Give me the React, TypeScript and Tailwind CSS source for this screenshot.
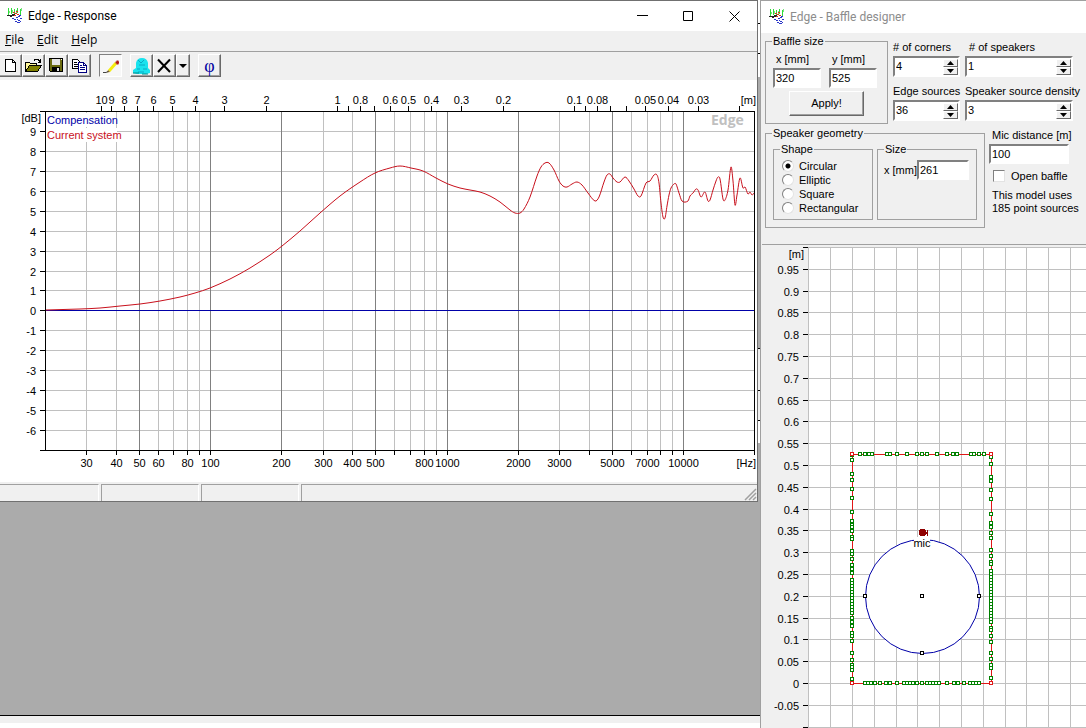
import { useState } from 'react';
import type { ReactNode } from 'react';

const DECADE = 236.6;

const freqX = (f: number) => Math.round(210 + DECADE * (Math.log10(f) - 2)) + 0.5;
const levelY = (db: number) => Math.round(31 + ((10 - db) * 339) / 17) + 0.5;
const SPEED_OF_SOUND = 345;

const frequencies = [
  30, 40, 50, 60, 70, 80, 90, 100, 200, 300, 400, 500, 600, 700, 800, 900,
  1000, 2000, 3000, 4000, 5000, 6000, 7000, 8000, 9000, 10000
];
const strongFrequencies = [50, 100, 200, 500, 1000, 2000, 5000, 10000];
const hiddenFrequencies = [70, 90, 600, 700, 900, 4000, 6000, 8000, 9000];

const wavelengths = [
  10, 9, 8, 7, 6, 5, 4, 3, 2, 1, 0.9, 0.8, 0.7, 0.6, 0.5, 0.4, 0.3, 0.2,
  0.1, 0.09, 0.08, 0.07, 0.06, 0.05, 0.04, 0.03, 0.02
];
const hiddenWavelengths = [0.9, 0.7, 0.09, 0.07, 0.06, 0.02];

const levels = [9, 8, 7, 6, 5, 4, 3, 2, 1, 0, -1, -2, -3, -4, -5, -6];

const response: [number, number][] = [
  [46, 230], [80, 229], [100, 228], [120, 226], [140, 224], [160, 221], [180, 217],
  [195, 213], [210, 208], [230, 199], [250, 188], [270, 175], [282, 166], [300, 151],
  [320, 133], [340, 116], [360, 102], [375, 93], [390, 88], [400, 86], [411, 88],
  [423, 91], [436, 98], [448, 104], [460, 108], [470, 110], [480, 112], [490, 116],
  [500, 122], [510, 130], [515, 133], [520, 133], [524, 129], [530, 117], [537, 96],
  [541, 87], [545, 83], [549, 83], [554, 90], [559, 101], [563, 106], [567, 107],
  [572, 104], [577, 102], [582, 105], [588, 113], [595, 121], [599, 117], [604, 102],
  [607, 95], [610, 94], [613, 98], [617, 102], [620, 102], [625, 97], [629, 101],
  [634, 109], [638, 116], [641, 116], [646, 103], [650, 101], [654, 95], [657, 95],
  [659, 103], [661, 123], [663, 137], [665, 138], [667, 126], [669, 115], [671, 108],
  [674, 104], [676, 104], [679, 113], [682, 121], [688, 121], [690, 116], [693, 113],
  [696, 109], [698, 110], [701, 117], [705, 112], [708, 121], [710, 120], [713, 110],
  [716, 101], [718, 97], [720, 99], [723, 119], [725, 120], [728, 110], [731, 87],
  [733, 101], [735, 125], [737, 115], [740, 98], [743, 108], [745, 107], [748, 114],
  [750, 112], [752, 115], [754, 113]
];

const smoothPath = (points: [number, number][]) => {
  let d = `M${points[0][0]} ${points[0][1]}`;
  for (let i = 0; i < points.length - 1; i++) {
    const before = points[Math.max(i - 1, 0)];
    const from = points[i];
    const to = points[i + 1];
    const after = points[Math.min(i + 2, points.length - 1)];
    const span = (to[0] - from[0]) / 3;
    const m1 = (to[1] - before[1]) / (to[0] - before[0]);
    const m2 = (after[1] - from[1]) / (after[0] - from[0]);
    d += `C${from[0] + span} ${from[1] + m1 * span} ${to[0] - span} ${to[1] - m2 * span} ${to[0]} ${to[1]}`;
  }
  return d;
};

const AppIcon = () => (
  <svg width="16" height="16" viewBox="0 0 16 16" fill="none" shapeRendering="crispEdges" aria-hidden="true">
    <path d="M1.5 0v7M4.5 0v6M7.5 1v6M10.5 0v5M13.5 1v6" stroke="#2fdc3a" />
    <path d="M2.5 3v2M5.5 2v3M9.5 2v3M14.5 0v3" stroke="#7be57f" />
    <path d="M0 7.5h8M3 8.5h2M5 6.5h3" stroke="#222" />
    <path d="M6 4.5h2M8 5.5h2M10 6.5h2M7 7.5h2M9 3.5h2" stroke="#e03020" />
    <path d="M5 10.5h2M7 11.5h2M9 9.5h2M11 8.5h2M8 13.5h2M11 12.5h2M13 10.5h2M10 14.5h3M13 13.5h1M12 7.5h2M10 11.5h1" stroke="#2a35c8" />
  </svg>
);

const ResponseChart = () => (
  <svg viewBox="0 0 757 402" className="block w-full bg-white font-['Liberation_Sans',Arial,sans-serif] text-[11px]">
    <g shapeRendering="crispEdges">
      {levels.map((db) => (
        <path key={db} d={`M46 ${levelY(db)}H754`} stroke="#c0c0c0" />
      ))}
      {frequencies.map((f) => (
        <path key={f} d={`M${freqX(f)} 32V370`} stroke={strongFrequencies.includes(f) ? '#808080' : '#c0c0c0'} />
      ))}
      <path d="M40 31.5H755M40 370.5H755M45.5 31V371M754.5 31V375" stroke="#000" />
      {levels.map((db) => (
        <path key={db} d={`M40 ${levelY(db)}H45`} stroke="#000" />
      ))}
      {frequencies.map((f) => (
        <path key={f} d={`M${freqX(f)} 370V375`} stroke="#000" />
      ))}
      {wavelengths.map((w) => (
        <path key={w} d={`M${freqX(SPEED_OF_SOUND / w)} 26V31`} stroke="#000" />
      ))}
      <path d={`M46 ${levelY(0)}H754`} stroke="#0000a8" />
    </g>
    <path d={smoothPath(response)} fill="none" stroke="#c8101c" />
    <rect x="46" y="33" width="70" height="14" fill="#fff" />
    <rect x="46" y="48" width="71" height="14" fill="#fff" />
    <g textAnchor="end">
      {levels.map((db) => (
        <text key={db} x="36" y={levelY(db) + 4}>{db}</text>
      ))}
      <text x="41" y="42">[dB]</text>
      <text x="756" y="24">[m]</text>
      <text x="756" y="387">[Hz]</text>
    </g>
    <g textAnchor="middle">
      {frequencies.filter((f) => !hiddenFrequencies.includes(f)).map((f) => (
        <text key={f} x={freqX(f)} y="387">{f}</text>
      ))}
      {wavelengths.filter((w) => !hiddenWavelengths.includes(w)).map((w) => (
        <text key={w} x={freqX(SPEED_OF_SOUND / w)} y="24">{w}</text>
      ))}
    </g>
    <text x="47" y="44" fill="#0000a8">Compensation</text>
    <text x="47" y="59" fill="#c8101c">Current system</text>
    <text x="711" y="45" fill="#c0c0c0" className="font-['Open_Sans',sans-serif] text-[14px] font-bold">Edge</text>
  </svg>
);

const ToolButton = ({ label, pressed, narrow, children }: { label: string; pressed?: boolean; narrow?: boolean; children: ReactNode }) => (
  <button
    type="button"
    aria-label={label}
    className={`flex h-[23px] shrink-0 items-center justify-center border ${narrow ? 'w-[14px]' : 'w-[23px]'} ${
      pressed
        ? 'border-t-[#808080] border-l-[#808080] border-r-white border-b-white bg-[#f7f7f7]'
        : 'border-t-white border-l-white border-r-[#696969] border-b-[#696969] bg-[#f0f0f0] shadow-[inset_-1px_-1px_0_#a0a0a0]'
    }`}
  >
    {children}
  </button>
);

const Toolbar = () => (
  <div className="flex h-7 items-start overflow-hidden bg-[#f0f0f0] pt-[2px]">
    <div className="-ml-px flex">
      <ToolButton label="New">
        <svg width="17" height="17" viewBox="0 0 17 17" shapeRendering="crispEdges">
          <path d="M3.5 2.5h7l3 3v9h-10z" fill="#fff" stroke="#000" />
          <path d="M10.5 2.5v3h3" fill="none" stroke="#000" />
        </svg>
      </ToolButton>
      <ToolButton label="Open">
        <svg width="17" height="17" viewBox="0 0 17 17" shapeRendering="crispEdges">
          <path d="M0.500 14.500v-9h4l1 1h6v2" fill="#fff79a" stroke="#000" />
          <path d="M0.500 14.500l4-6h12l-4 6z" fill="#808000" stroke="#000" />
          <path d="M9 3.500l1-1h3l2 2M15.500 2v3h-3" fill="none" stroke="#000" />
        </svg>
      </ToolButton>
      <ToolButton label="Save">
        <svg width="17" height="17" viewBox="0 0 17 17" shapeRendering="crispEdges">
          <path d="M1.500 1.500h13v13h-12l-1-1z" fill="#6b6b10" stroke="#000" />
          <path d="M4 2h8v6h-8z" fill="#e4e4e4" />
          <path d="M4 10h8v4h-8z" fill="#000" />
          <path d="M9 11h2v3h-2z" fill="#e4e4e4" />
          <path d="M13 2h1v1h-1z" fill="#fff" />
        </svg>
      </ToolButton>
      <ToolButton label="Copy">
        <svg width="17" height="17" viewBox="0 0 17 17" shapeRendering="crispEdges">
          <path d="M1.500 2.500h5l3 3v6h-8z" fill="#fff" stroke="#000" />
          <path d="M3 5.500h3M3 7.500h4M3 9.500h4" stroke="#000" />
          <path d="M7.500 5.500h5l3 3v7h-8z" fill="#fff" stroke="#000080" />
          <path d="M12.500 5.500v3h3M9 8.500h2M9 10.500h5M9 12.500h5" fill="none" stroke="#000080" />
        </svg>
      </ToolButton>
    </div>
    <div className="ml-2 flex">
      <ToolButton label="Draw curve" pressed>
        <svg width="17" height="17" viewBox="0 0 17 17">
          <path d="M7 14l7-8" stroke="#f4ec10" strokeWidth="3" />
          <path d="M15.500 3.500v4M13.500 5.500h4" stroke="#b01818" strokeWidth="2" />
          <path d="M5 15.500l1-2.500 2 2z" fill="#806020" />
          <path d="M1 15.500h3l2-1" fill="none" stroke="#444" />
        </svg>
      </ToolButton>
    </div>
    <div className="ml-2 flex">
      <ToolButton label="Baffle">
        <svg width="17" height="18" viewBox="0 0 17 18">
          <path d="M3 11V6q1-5 6-5t6 5v5l2 2v3l-4 1H4l-4-1v-3z" fill="#19e3ee" />
          <path d="M5 3l3 3M11 3l-3 3M6 8h6M4 12h3M10 12h4M5 15h6" stroke="#0aa9c4" />
          <path d="M0 16h6M9 17h6" stroke="#088" />
        </svg>
      </ToolButton>
      <ToolButton label="Delete">
        <svg width="17" height="17" viewBox="0 0 17 17" fill="none">
          <path d="M2 2.500L14 15" stroke="#000" strokeWidth="2" />
          <path d="M14 2.500L2 15" stroke="#000" strokeWidth="2" />
        </svg>
      </ToolButton>
      <ToolButton label="Delete options" narrow>
        <svg width="8" height="4" viewBox="0 0 8 4"><path d="M0 0h8L4 4z" /></svg>
      </ToolButton>
    </div>
    <div className="ml-2 flex">
      <ToolButton label="Phase">
        <span className="font-['Liberation_Serif',serif] text-[18px] leading-4 text-[#0000a0]">φ</span>
      </ToolButton>
    </div>
  </div>
);

const ResponseWindow = () => (
  <section className="border-t border-r border-b border-[#707070] bg-[#f0f0f0]">
    <header className="flex h-[30px] items-center bg-white pl-[7px]">
      <AppIcon />
      <h1 className="ml-[5px] flex-1 font-['Roboto',sans-serif] text-[12px]">Edge - Response</h1>
      <button type="button" aria-label="Minimize" className="flex h-full w-[45px] items-center justify-center">
        <svg width="11" height="11" viewBox="0 0 11 11"><path d="M0 4.500h11" stroke="#000" /></svg>
      </button>
      <button type="button" aria-label="Maximize" className="flex h-full w-[46px] items-center justify-center">
        <svg width="11" height="11" viewBox="0 0 11 11" fill="none"><path d="M.5.5h9v9h-9z" stroke="#000" /></svg>
      </button>
      <button type="button" aria-label="Close" className="flex h-full w-[46px] items-center justify-center">
        <svg width="11" height="11" viewBox="0 0 11 11"><path d="M.5.5l10 10M10.500.5l-10 10" stroke="#000" /></svg>
      </button>
    </header>
    <nav className="flex h-[21px] items-start gap-[13px] border-b border-[#a0a0a0] pl-[5px] text-[12px] leading-[18px]">
      <button type="button"><u>F</u>ile</button>
      <button type="button"><u>E</u>dit</button>
      <button type="button"><u>H</u>elp</button>
    </nav>
    <Toolbar />
    <ResponseChart />
    <footer className="flex h-[19px] gap-[2px] pt-[2px]">
      <div className="w-[99px] border-t border-[#a0a0a0] border-r border-r-white" />
      <div className="w-[98px] border-t border-l border-[#a0a0a0] border-r border-r-white" />
      <div className="w-[98px] border-t border-l border-[#a0a0a0] border-r border-r-white" />
      <div className="flex flex-1 items-end justify-end border-t border-l border-[#a0a0a0]">
        <svg width="13" height="13" viewBox="0 0 13 13" stroke="#a0a0a0" strokeWidth="1.500">
          <path d="M1 12L12 1M5 12l7-7M9 12l3-3" />
        </svg>
      </div>
    </footer>
  </section>
);

const sunken = 'border-2 border-t-[#808080] border-l-[#808080] border-r-white border-b-white bg-white';

const NumberBox = ({ label, id, value, className }: { label: string; id: string; value: string; className: string }) => (
  <div>
    <label htmlFor={id} className="mb-[2px] block pl-[3px] leading-[14px] whitespace-nowrap">{label}</label>
    <input id={id} defaultValue={value} className={`h-5 pl-px outline-none ${sunken} ${className}`} />
  </div>
);

const Spinner = ({ label, id, initial, indent }: { label: string; id: string; initial: number; indent?: boolean }) => {
  const [value, setValue] = useState(initial);
  const arrow = 'flex h-2 w-[15px] items-center justify-center border border-t-white border-l-white border-r-[#696969] border-b-[#696969] bg-[#f0f0f0]';
  return (
    <div>
      <label htmlFor={id} className={`mb-[2px] block leading-[14px] whitespace-nowrap ${indent ? 'pl-1' : ''}`}>{label}</label>
      <div className={`flex h-[21px] items-center ${sunken}`}>
        <input
          id={id}
          value={value}
          onChange={(e) => setValue(Number(e.target.value) || 0)}
          className="w-0 min-w-0 flex-1 pl-px outline-none"
        />
        <div>
          <button type="button" aria-label={`Increase ${label}`} className={arrow} onClick={() => setValue(value + 1)}>
            <svg width="7" height="4" viewBox="0 0 7 4" className="shrink-0"><path d="M0 4h7L3.500 0z" /></svg>
          </button>
          <button type="button" aria-label={`Decrease ${label}`} className={arrow} onClick={() => setValue(value - 1)}>
            <svg width="7" height="4" viewBox="0 0 7 4" className="shrink-0"><path d="M0 0h7L3.500 4z" /></svg>
          </button>
        </div>
      </div>
    </div>
  );
};

const Group = ({ title, className, children }: { title: string; className: string; children: ReactNode }) => (
  <fieldset className={`border border-[#a0a0a0] ${className}`}>
    <legend className="ml-[6px] px-px leading-3">{title}</legend>
    {children}
  </fieldset>
);

const shapes = ['Circular', 'Elliptic', 'Square', 'Rectangular'];

const Controls = () => {
  const [shape, setShape] = useState('Circular');
  return (
    <div className="border-b border-[#a0a0a0] bg-[#f0f0f0] pt-[2px] pb-4 pl-[3px] font-['Liberation_Sans',Arial,sans-serif] text-[11px]">
      <div className="flex gap-[5px] pr-[13px]">
        <Group title="Baffle size" className="w-[123px] shrink-0 pb-[7px]">
          <div className="flex gap-2 px-[7px] pt-[5px]">
            <NumberBox label="x [mm]" id="baffle-x" value="320" className="w-[48px]" />
            <NumberBox label="y [mm]" id="baffle-y" value="525" className="w-[48px]" />
          </div>
          <button type="button" className="mx-auto mt-[3px] block h-[25px] w-[75px] border border-t-white border-l-white border-r-[#696969] border-b-[#696969] shadow-[inset_-1px_-1px_0_#a0a0a0]">
            Apply!
          </button>
        </Group>
        <div className="grid flex-1 grid-cols-[67px_minmax(0,1fr)] content-start gap-x-[5px] gap-y-[7px] pt-[5px]">
          <Spinner label="# of corners" id="corners" initial={4} />
          <Spinner label="# of speakers" id="speakers" initial={1} indent />
          <Spinner label="Edge sources" id="edge-sources" initial={36} />
          <Spinner label="Speaker source density" id="density" initial={3} />
        </div>
      </div>
      <div className="mt-[3px] flex gap-1">
        <Group title="Speaker geometry" className="w-[220px] shrink-0 pb-[7px]">
          <div className="flex gap-1 px-[7px] pt-1">
            <Group title="Shape" className="w-[100px] shrink-0 pb-1">
              <div className="pt-1">
                {shapes.map((name) => (
                  <label key={name} className="flex h-[14px] items-center gap-[5px] pl-2">
                    <input
                      type="radio"
                      name="shape"
                      checked={shape === name}
                      onChange={() => setShape(name)}
                      className="size-3 appearance-none rounded-full border border-t-[#808080] border-l-[#808080] border-r-[#e3e3e3] border-b-[#e3e3e3] bg-white checked:bg-[radial-gradient(circle,#000_2px,#fff_3px)]"
                    />
                    {name}
                  </label>
                ))}
              </div>
            </Group>
            <Group title="Size" className="w-[100px] shrink-0">
              <div className="flex items-center pt-[5px] pl-[6px]">
                <label htmlFor="size-x" className="whitespace-nowrap">x [mm]</label>
                <input id="size-x" defaultValue="261" className={`h-5 w-[52px] pl-px outline-none ${sunken}`} />
              </div>
            </Group>
          </div>
        </Group>
        <div className="pt-px">
          <NumberBox label="Mic distance [m]" id="mic-distance" value="100" className="w-[80px]" />
          <label className="mt-[5px] flex h-[14px] items-center gap-[6px] pl-1">
            <input type="checkbox" className="size-3 appearance-none border border-t-[#808080] border-l-[#808080] border-r-[#e3e3e3] border-b-[#e3e3e3] bg-white checked:bg-black" />
            Open baffle
          </label>
          <p className="mt-[6px] pl-[3px] leading-[13px]">
            This model uses
            <br />
            185 point sources
          </p>
        </div>
      </div>
    </div>
  );
};

// Baffle drawing: 436 units per metre, origin at the lower left corner
const metreY = (m: number) => Math.round(438 - 436 * m) + 0.5;
const metreX = (m: number) => Math.round(90 + 436 * m) + 0.5;

const gridColumns = Array.from({ length: 13 }, (_, i) => (i - 2) / 20);
const gridRows = Array.from({ length: 23 }, (_, i) => (20 - i) / 20);

const run = (from: number, to: number) => Array.from({ length: (to - from) / 3 + 1 }, (_, i) => from + i * 3);

const topSources = [98, 103, 107, 110, 125, 128, 135, 145, 155, 160, 165, 175, 185, 191, 195, 209, 212, 217, 222];
const bottomSources = [
  103, 106, 109, 113, 118, 124, 128, 135, 142, 145, 148, 151, 155, 160, 165, 168, 171, 174, 177, 185, 192, 196,
  202, 208, 211, 214, 217
];
const leftSources = [
  210, 215, 229, 235, 244, 253, 267, 276, 280, 282, 286, 292, 294, 306, 309, 314, 320, 324, 328, ...run(335, 368),
  373, 377, 381, 388, 391, 396, 408, 415, 420, 422, 425, 434
];
const rightSources = [
  212, 219, 232, 236, 245, 254, 269, 278, 282, 288, 293, 305, 311, 317, 319, ...run(326, 377), 383, 385, 391, 397,
  408, 414, 420, 423, 433
];

const Handle = ({ x, y, color }: { x: number; y: number; color: string }) => (
  <rect x={x - 1.5} y={y - 1.5} width="3" height="3" fill="#fff" stroke={color} />
);

const BaffleDrawing = () => (
  <svg viewBox="0 0 324 483" className="block w-full bg-[#f0f0f0] font-['Liberation_Sans',Arial,sans-serif] text-[11px]">
    <rect x="46" y="2" width="278" height="481" fill="#fff" />
    <g shapeRendering="crispEdges">
      {gridColumns.map((m) => (
        <path key={m} d={`M${metreX(m)} 2V483`} stroke="#c0c0c0" />
      ))}
      {gridRows.map((m) => (
        <g key={m}>
          <path d={`M46 ${metreY(m)}H324`} stroke="#c0c0c0" />
          <path d={`M41 ${metreY(m)}H46`} stroke="#000" />
        </g>
      ))}
      <rect x="90.5" y="209.5" width="139" height="229" fill="none" stroke="#e01818" />
    </g>
    <circle cx="160.5" cy="351.5" r="57" fill="#fff" stroke="#0000a8" />
    <rect x="152" y="292" width="16" height="13" fill="#fff" />
    <g shapeRendering="crispEdges">
      {topSources.map((x) => <Handle key={x} x={x} y={209} color="#008000" />)}
      {bottomSources.map((x) => <Handle key={x} x={x} y={438} color="#008000" />)}
      {leftSources.map((y) => <Handle key={y} x={90} y={y} color="#008000" />)}
      {rightSources.map((y) => <Handle key={y} x={229} y={y} color="#008000" />)}
      <Handle x={90} y={209} color="#e01818" />
      <Handle x={229} y={209} color="#e01818" />
      <Handle x={90} y={438} color="#e01818" />
      <Handle x={229} y={438} color="#e01818" />
      <Handle x={103} y={351} color="#000" />
      <Handle x={160} y={351} color="#000" />
      <Handle x={217} y={351} color="#000" />
      <Handle x={160} y={408} color="#000" />
      <path d="M158 284h5v1h1v2h1v-2h1v6h-1v-2h-1v1h-1v1h-5v-1h-1v-5h1z" fill="#900000" />
    </g>
    <text x="160" y="302" textAnchor="middle">mic</text>
    <g textAnchor="end">
      <text x="42" y="13">[m]</text>
      {gridRows.slice(1, -1).map((m) => (
        <text key={m} x="37" y={metreY(m) + 4}>{m}</text>
      ))}
    </g>
  </svg>
);

const BaffleWindow = () => (
  <section className="flex w-[326px] shrink-0 flex-col border-t border-l border-[#a0a0a0] bg-[#f0f0f0]">
    <header className="flex h-8 items-center bg-white pl-2">
      <AppIcon />
      <h2 className="ml-[5px] font-['Roboto',sans-serif] text-[12px] text-[#8c8c8c]">Edge - Baffle designer</h2>
    </header>
    <div className="pl-px">
      <Controls />
      <BaffleDrawing />
    </div>
  </section>
);

export default function App() {
  return (
    <main className="flex h-screen overflow-hidden bg-[#ababab] font-['Open_Sans','Noto_Sans',sans-serif] text-black">
      <div className="flex min-w-0 flex-1 flex-col">
        <div className="flex">
          <div className="min-w-0 flex-1">
            <ResponseWindow />
          </div>
          {/* edge of the window behind */}
          <div className="flex w-[2px] flex-col">
            <div className="h-6 border-b border-black bg-white" />
            <div className="h-[30px] border-b border-black bg-white" />
            <div className="h-[23px] bg-white" />
            <div className="h-[271px]" />
            <div className="h-[43px] border-y border-black bg-[#f0f0f0]" />
            <div className="h-[30px] border-b border-black bg-[#f0f0f0]" />
            <div className="h-[22px] bg-white" />
          </div>
        </div>
        <div className="flex-1" />
        <div className="h-2 border-t border-black bg-[#f0f0f0]" />
        <div className="h-[5px] bg-white" />
      </div>
      <BaffleWindow />
    </main>
  );
}
